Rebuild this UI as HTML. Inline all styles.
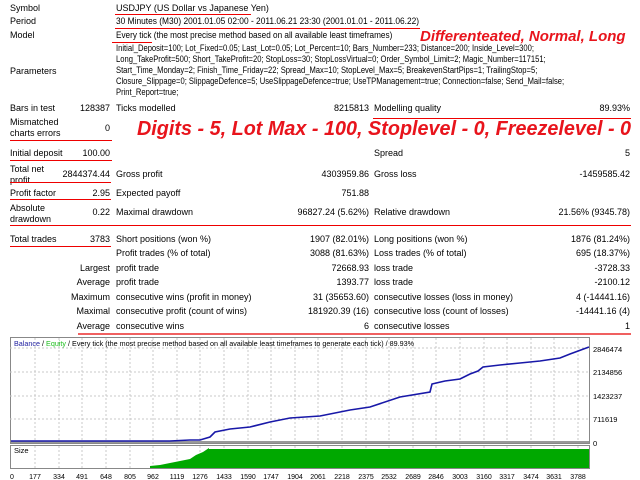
<!DOCTYPE html><html><head><meta charset="utf-8"><style>
body{margin:0;width:640px;height:480px;background:#fff;position:relative;overflow:hidden;font-family:"Liberation Sans",sans-serif;font-size:9px;color:#000}
.t{position:absolute;white-space:nowrap;line-height:11px}
.r{text-align:right}
.l{position:absolute;height:1px;background:#e00}
.red{position:absolute;color:#e8141c;font-weight:bold;font-style:italic;white-space:nowrap;transform-origin:0 0}
</style></head><body>
<div class="t" style="left:10px;top:3px">Symbol</div>
<div class="t" style="left:116px;top:3px">USDJPY (US Dollar vs Japanese Yen)</div>
<div class="l" style="left:115px;top:14px;width:136px"></div>
<div class="t" style="left:10px;top:16px">Period</div>
<div class="t" style="left:116px;top:16px;transform:scaleX(0.93);transform-origin:0 0">30 Minutes (M30) 2001.01.05 02:00 - 2011.06.21 23:30 (2001.01.01 - 2011.06.22)</div>
<div class="l" style="left:115px;top:28px;width:305px"></div>
<div class="t" style="left:10px;top:30px">Model</div>
<div class="t" style="left:116px;top:30px;transform:scaleX(0.91);transform-origin:0 0">Every tick (the most precise method based on all available least timeframes)</div>
<div class="l" style="left:112px;top:42px;width:40px"></div>
<div class="red" style="left:420px;top:28px;font-size:15px;transform:scaleX(1.0)">Differenteated, Normal, Long</div>
<div class="t" style="left:116px;top:43px;line-height:11px;transform:scaleX(0.845);transform-origin:0 0">Initial_Deposit=100; Lot_Fixed=0.05; Last_Lot=0.05; Lot_Percent=10; Bars_Number=233; Distance=200; Inside_Level=300;<br>Long_TakeProfit=500; Short_TakeProfit=20; StopLoss=30; StopLossVirtual=0; Order_Symbol_Limit=2; Magic_Number=117151;<br>Start_Time_Monday=2; Finish_Time_Friday=22; Spread_Max=10; StopLevel_Max=5; BreakevenStartPips=1; TrailingStop=5;<br>Closure_Slippage=0; SlippageDefence=5; UseSlippageDefence=true; UseTPManagement=true; Connection=false; Send_Mail=false;<br>Print_Report=true;</div>
<div class="t" style="left:10px;top:66px">Parameters</div>

<div class="t" style="left:10px;top:103px">Bars in test</div><div class="t r" style="left:60px;width:50px;top:103px">128387</div>
<div class="t" style="left:116px;top:103px">Ticks modelled</div><div class="t r" style="left:260px;width:109px;top:103px">8215813</div>
<div class="t" style="left:374px;top:103px">Modelling quality</div><div class="t r" style="left:560px;width:70px;top:103px">89.93%</div>
<div class="l" style="left:373px;top:118px;width:258px"></div>
<div class="t" style="left:10px;top:117px">Mismatched<br>charts errors</div><div class="t r" style="left:60px;width:50px;top:123px">0</div>
<div class="l" style="left:10px;top:140px;width:102px"></div>
<div class="red" style="left:137px;top:118px;font-size:20px;transform:scaleX(0.99)">Digits - 5, Lot Max - 100, Stoplevel - 0, Freezelevel - 0</div>
<div class="t" style="left:10px;top:148px">Initial deposit</div><div class="t r" style="left:60px;width:50px;top:148px">100.00</div>
<div class="l" style="left:10px;top:160px;width:102px"></div>
<div class="t" style="left:374px;top:148px">Spread</div><div class="t r" style="left:560px;width:70px;top:148px">5</div>

<div class="t" style="left:10px;top:164px">Total net<br>profit</div><div class="t r" style="left:50px;width:60px;top:169px">2844374.44</div>
<div class="l" style="left:10px;top:182px;width:101px"></div>
<div class="t" style="left:116px;top:169px">Gross profit</div><div class="t r" style="left:260px;width:109px;top:169px">4303959.86</div>
<div class="t" style="left:374px;top:169px">Gross loss</div><div class="t r" style="left:520px;width:110px;top:169px">-1459585.42</div>
<div class="t" style="left:10px;top:188px">Profit factor</div><div class="t r" style="left:60px;width:50px;top:188px">2.95</div>
<div class="l" style="left:10px;top:199px;width:101px"></div>
<div class="t" style="left:116px;top:188px">Expected payoff</div><div class="t r" style="left:260px;width:109px;top:188px">751.88</div>
<div class="t" style="left:10px;top:203px">Absolute<br>drawdown</div><div class="t r" style="left:60px;width:50px;top:207px">0.22</div>
<div class="t" style="left:116px;top:207px">Maximal drawdown</div><div class="t r" style="left:240px;width:129px;top:207px">96827.24 (5.62%)</div>
<div class="t" style="left:374px;top:207px">Relative drawdown</div><div class="t r" style="left:510px;width:120px;top:207px">21.56% (9345.78)</div>
<div class="l" style="left:10px;top:225px;width:621px"></div>

<div class="t" style="left:10px;top:234px">Total trades</div><div class="t r" style="left:60px;width:50px;top:234px">3783</div>
<div class="l" style="left:10px;top:246px;width:101px"></div>
<div class="t" style="left:116px;top:234px">Short positions (won %)</div><div class="t r" style="left:240px;width:129px;top:234px">1907 (82.01%)</div>
<div class="t" style="left:374px;top:234px">Long positions (won %)</div><div class="t r" style="left:510px;width:120px;top:234px">1876 (81.24%)</div>
<div class="t" style="left:116px;top:248px">Profit trades (% of total)</div><div class="t r" style="left:240px;width:129px;top:248px">3088 (81.63%)</div>
<div class="t" style="left:374px;top:248px">Loss trades (% of total)</div><div class="t r" style="left:510px;width:120px;top:248px">695 (18.37%)</div>
<div class="t r" style="left:40px;width:70px;top:263px">Largest</div><div class="t" style="left:116px;top:263px">profit trade</div><div class="t r" style="left:240px;width:129px;top:263px">72668.93</div>
<div class="t" style="left:374px;top:263px">loss trade</div><div class="t r" style="left:510px;width:120px;top:263px">-3728.33</div>
<div class="t r" style="left:40px;width:70px;top:277px">Average</div><div class="t" style="left:116px;top:277px">profit trade</div><div class="t r" style="left:240px;width:129px;top:277px">1393.77</div>
<div class="t" style="left:374px;top:277px">loss trade</div><div class="t r" style="left:510px;width:120px;top:277px">-2100.12</div>
<div class="t r" style="left:40px;width:70px;top:292px">Maximum</div><div class="t" style="left:116px;top:292px">consecutive wins (profit in money)</div><div class="t r" style="left:240px;width:129px;top:292px">31 (35653.60)</div>
<div class="t" style="left:374px;top:292px">consecutive losses (loss in money)</div><div class="t r" style="left:510px;width:120px;top:292px">4 (-14441.16)</div>
<div class="t r" style="left:40px;width:70px;top:306px">Maximal</div><div class="t" style="left:116px;top:306px">consecutive profit (count of wins)</div><div class="t r" style="left:240px;width:129px;top:306px">181920.39 (16)</div>
<div class="t" style="left:374px;top:306px">consecutive loss (count of losses)</div><div class="t r" style="left:510px;width:120px;top:306px">-14441.16 (4)</div>
<div class="t r" style="left:40px;width:70px;top:321px">Average</div><div class="t" style="left:116px;top:321px">consecutive wins</div><div class="t r" style="left:240px;width:129px;top:321px">6</div>
<div class="t" style="left:374px;top:321px">consecutive losses</div><div class="t r" style="left:510px;width:120px;top:321px">1</div>
<div class="l" style="left:78px;top:333px;width:553px;background:#f06060;height:2px"></div>

<svg style="position:absolute;left:0;top:0" width="640" height="480">
<g font-family="Liberation Sans,sans-serif" font-size="7.5">
<rect x="10.5" y="337.5" width="579" height="106" fill="#fff" stroke="#888"/>
<rect x="10.5" y="445.5" width="579" height="23" fill="#fff" stroke="#888"/>
<g stroke="#c8c8c8" stroke-dasharray="2,2">
<path d="M10 348H589M10 372H589M10 396H589M10 419H589"/>
<path d="M35 338V443M59 338V443M82 338V443M106 338V443M130 338V443M153 338V443M177 338V443M200 338V443M224 338V443M248 338V443M271 338V443M295 338V443M318 338V443M342 338V443M366 338V443M389 338V443M413 338V443M436 338V443M460 338V443M484 338V443M507 338V443M531 338V443M554 338V443M578 338V443"/>
<path d="M35 446V468M59 446V468M82 446V468M106 446V468M130 446V468M153 446V468M177 446V468M200 446V468M224 446V468M248 446V468M271 446V468M295 446V468M318 446V468M342 446V468M366 446V468M389 446V468M413 446V468M436 446V468M460 446V468M484 446V468M507 446V468M531 446V468M554 446V468M578 446V468"/>
</g>
<path d="M11 442H589" stroke="#999" stroke-width="2"/>
<path d="M150 468L150 466L160 465L170 463L180 461L190 459L196 455L203 452L209 448L209 449H589V468Z" fill="#00a800"/>
<path d="M11 441L170 441L190 440L200 440L210 437L215 432L230 429L250 427L270 422L290 418L320 416L350 410L370 407L400 397L430 392L432 384L445 381L460 379L470 374L478 371L483 367L500 365L520 363L540 361L560 358L570 354L589 347" fill="none" stroke="#1818a8" stroke-width="1.6"/>
<text x="14" y="346" textLength="400" lengthAdjust="spacingAndGlyphs"><tspan fill="#2020a0">Balance</tspan> / <tspan fill="#20c020">Equity</tspan> / Every tick (the most precise method based on all available least timeframes to generate each tick) / 89.93%</text>
<text x="14" y="453">Size</text>
<g>
<text x="593" y="352">2846474</text><text x="593" y="375">2134856</text><text x="593" y="399">1423237</text><text x="593" y="422">711619</text><text x="593" y="446">0</text>
</g>
<g text-anchor="middle" font-size="7">
<text x="12" y="479">0</text><text x="35" y="479">177</text><text x="59" y="479">334</text><text x="82" y="479">491</text><text x="106" y="479">648</text><text x="130" y="479">805</text><text x="153" y="479">962</text><text x="177" y="479">1119</text><text x="200" y="479">1276</text><text x="224" y="479">1433</text><text x="248" y="479">1590</text><text x="271" y="479">1747</text><text x="295" y="479">1904</text><text x="318" y="479">2061</text><text x="342" y="479">2218</text><text x="366" y="479">2375</text><text x="389" y="479">2532</text><text x="413" y="479">2689</text><text x="436" y="479">2846</text><text x="460" y="479">3003</text><text x="484" y="479">3160</text><text x="507" y="479">3317</text><text x="531" y="479">3474</text><text x="554" y="479">3631</text><text x="578" y="479">3788</text>
</g>
</g></svg>
</body></html>
